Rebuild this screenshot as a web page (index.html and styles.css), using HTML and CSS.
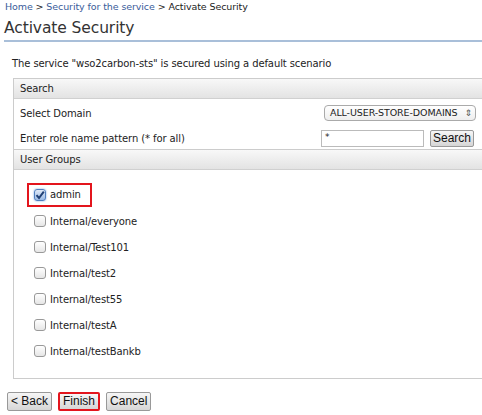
FILE: index.html
```html
<!DOCTYPE html>
<html>
<head>
<meta charset="utf-8">
<link rel="stylesheet" href="styles.css">
</head>
<body>
<div class="crumbs"><a class="lnk">Home</a> &gt; <a class="lnk">Security for the service</a> &gt; Activate Security</div>
<h1 class="title">Activate Security</h1>
<p class="intro">The service "wso2carbon-sts" is secured using a default scenario</p>
<div class="panel">
  <div class="head">Search</div>
  <div class="row r1">
    <span>Select Domain</span>
    <div class="sel"><span>ALL-USER-STORE-DOMAINS</span><span class="arr">&#8661;</span></div>
  </div>
  <div class="row r2">
    <span>Enter role name pattern (* for all)</span>
    <div class="ctrls"><div class="inp">*</div><div class="btn">Search</div></div>
  </div>
  <div class="head">User Groups</div>
  <div class="groups">
    <div class="g first"><span class="hl"><span class="cb on"><svg width="10" height="10" viewBox="0 0 10 10"><path d="M1.5 5.2 L4 8 L8.8 1.6" fill="none" stroke="#1f3f74" stroke-width="2"/></svg></span>admin</span></div>
    <div class="g"><span class="cb"></span>Internal/everyone</div>
    <div class="g"><span class="cb"></span>Internal/Test101</div>
    <div class="g"><span class="cb"></span>Internal/test2</div>
    <div class="g"><span class="cb"></span>Internal/test55</div>
    <div class="g"><span class="cb"></span>Internal/testA</div>
    <div class="g"><span class="cb"></span>Internal/testBankb</div>
  </div>
</div>
<div class="actions">
  <div class="btn">&lt; Back</div>
  <div class="btn red">Finish</div>
  <div class="btn">Cancel</div>
</div>
</body>
</html>
```
FILE: styles.css
```css
html, body { margin: 0; padding: 0; background: #fff; }
body { font-family: "DejaVu Sans", sans-serif; font-size: 10px; letter-spacing: -0.1px; color: #222; width: 482px; height: 415px; overflow: hidden; }
.crumbs { padding: 1px 0 0 5px; height: 13px; font-size: 9.5px; line-height: 12px; color: #222; }
.lnk { color: #3a5c9a; }
.title { margin: 4px 0 0 4px; font-size: 15.5px; font-weight: normal; color: #333; line-height: 20px; height: 20px; padding-bottom: 2px; border-bottom: 2px solid #a9bfd9; }
.intro { margin: 15px 0 0 12px; line-height: 13px; }
.panel { margin: 8px -10px 0 13px; border: 1px solid #ccc; border-right: none; }
.head { height: 19px; line-height: 19px; padding-left: 6px; background: linear-gradient(#f8f8f8, #e3e3e3); border-bottom: 1px solid #d0d0d0; color: #222; }
.row { display: flex; align-items: center; justify-content: space-between; padding: 0 16px 0 6px; }
.r1 { height: 28px; }
.r2 { height: 22px; padding-right: 18px; border-bottom: 1px solid #ccc; }
.sel { width: 142px; height: 14px; border: 1px solid #aaa; border-radius: 4px; font-size: 9.5px; line-height: 14px; padding: 0 3px 0 5px; display: flex; justify-content: space-between; white-space: nowrap; background: linear-gradient(#fff, #eee); }
.arr { font-size: 9px; color: #555; }
.ctrls { display: flex; align-items: center; gap: 6px; }
.inp { width: 98px; height: 15px; border: 1px solid #bbb; font-size: 9px; line-height: 12px; padding-left: 3px; }
.btn { font-family: "Liberation Sans", Arial, sans-serif; font-size: 12px; letter-spacing: 0; height: 17px; line-height: 15px; padding: 0 2px; border: 1px solid #999; border-radius: 2px; background: linear-gradient(#f6f6f6, #d6d6d6); color: #111; box-sizing: border-box; }
.groups { padding: 11px 0 14px 13px; }
.g { height: 26px; display: flex; align-items: center; padding-left: 7px; }
.g.first { height: 27px; padding-left: 0; }
.hl { display: inline-flex; align-items: center; border: 2px solid #e3151d; height: 20px; padding: 0 9px 0 5px; }
.cb { width: 10px; height: 10px; border: 1px solid #999; border-radius: 3px; background: linear-gradient(#fff, #e6e6e6); margin-right: 4px; display: inline-flex; align-items: center; justify-content: center; }
.cb.on { border-color: #4f7fbf; background: linear-gradient(#dfe9f7, #9ab9e4); box-shadow: 0 0 2px #6b9be0; }
.actions { display: flex; gap: 6px; padding: 13px 0 0 7px; }
.actions .btn { height: 19px; line-height: 17px; padding: 0 3px; }
.actions .btn.red { border: 2px solid #e3151d; line-height: 15px; }
```
